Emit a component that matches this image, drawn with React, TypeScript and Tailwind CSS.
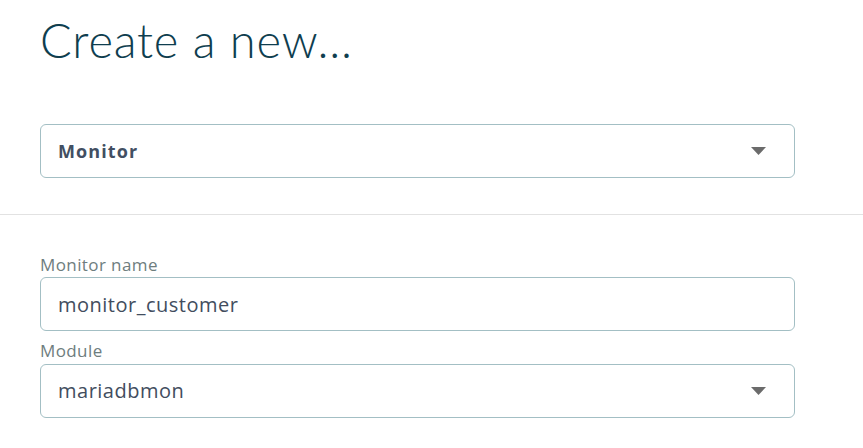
import { useState } from "react"

function Arrow() {
  return (
    <svg width="15" height="8" viewBox="0 0 15 8" className="shrink-0">
      <polygon points="0,0 15,0 7.5,8" fill="#6b6b6b" />
    </svg>
  )
}

function App() {
  const [kind] = useState("Monitor");
  const [name, setName] = useState("monitor_customer");
  const [module] = useState("mariadbmon");

  return (
    <div className="w-full h-screen bg-white font-['Open_Sans','Lato',sans-serif] overflow-hidden">
      <div className="px-10 pt-[12px]">
        <h1 className="font-['Lato',sans-serif] text-[47px] leading-[56px] font-light text-[#0f3e4f] tracking-[0.8px]">
          Create a new...
        </h1>
        <div className="mt-[56px] w-[755px] h-[54px] border border-[#a3bfc4] rounded-[6px] flex items-center justify-between pl-[17px] pr-[28px]">
          <span className="text-[18px] font-bold text-[#424f62] tracking-[1.1px]">{kind}</span>
          <Arrow />
        </div>
      </div>
      <div className="mt-[36px] border-t border-[#e2e2e2]" />
      <div className="px-10 pt-[40px] flex flex-col">
        <label className="text-[17px] leading-[20px] text-[#6e7d7e] tracking-[0.4px]">Monitor name</label>
        <input
          value={name}
          onChange={(e) => setName(e.target.value)}
          className="mt-[2px] w-[755px] h-[54px] border border-[#a3bfc4] rounded-[6px] px-[17px] text-[20px] tracking-[0.5px] text-[#424d5e] outline-none"
        />
        <label className="mt-[10px] text-[17px] leading-[20px] text-[#6e7d7e] tracking-[0.4px]">Module</label>
        <div className="mt-[3px] w-[755px] h-[54px] border border-[#a3bfc4] rounded-[6px] flex items-center justify-between pl-[17px] pr-[28px]">
          <span className="text-[20px] tracking-[0.5px] text-[#424d5e]">{module}</span>
          <Arrow />
        </div>
      </div>
    </div>
  )
}

export default App;
